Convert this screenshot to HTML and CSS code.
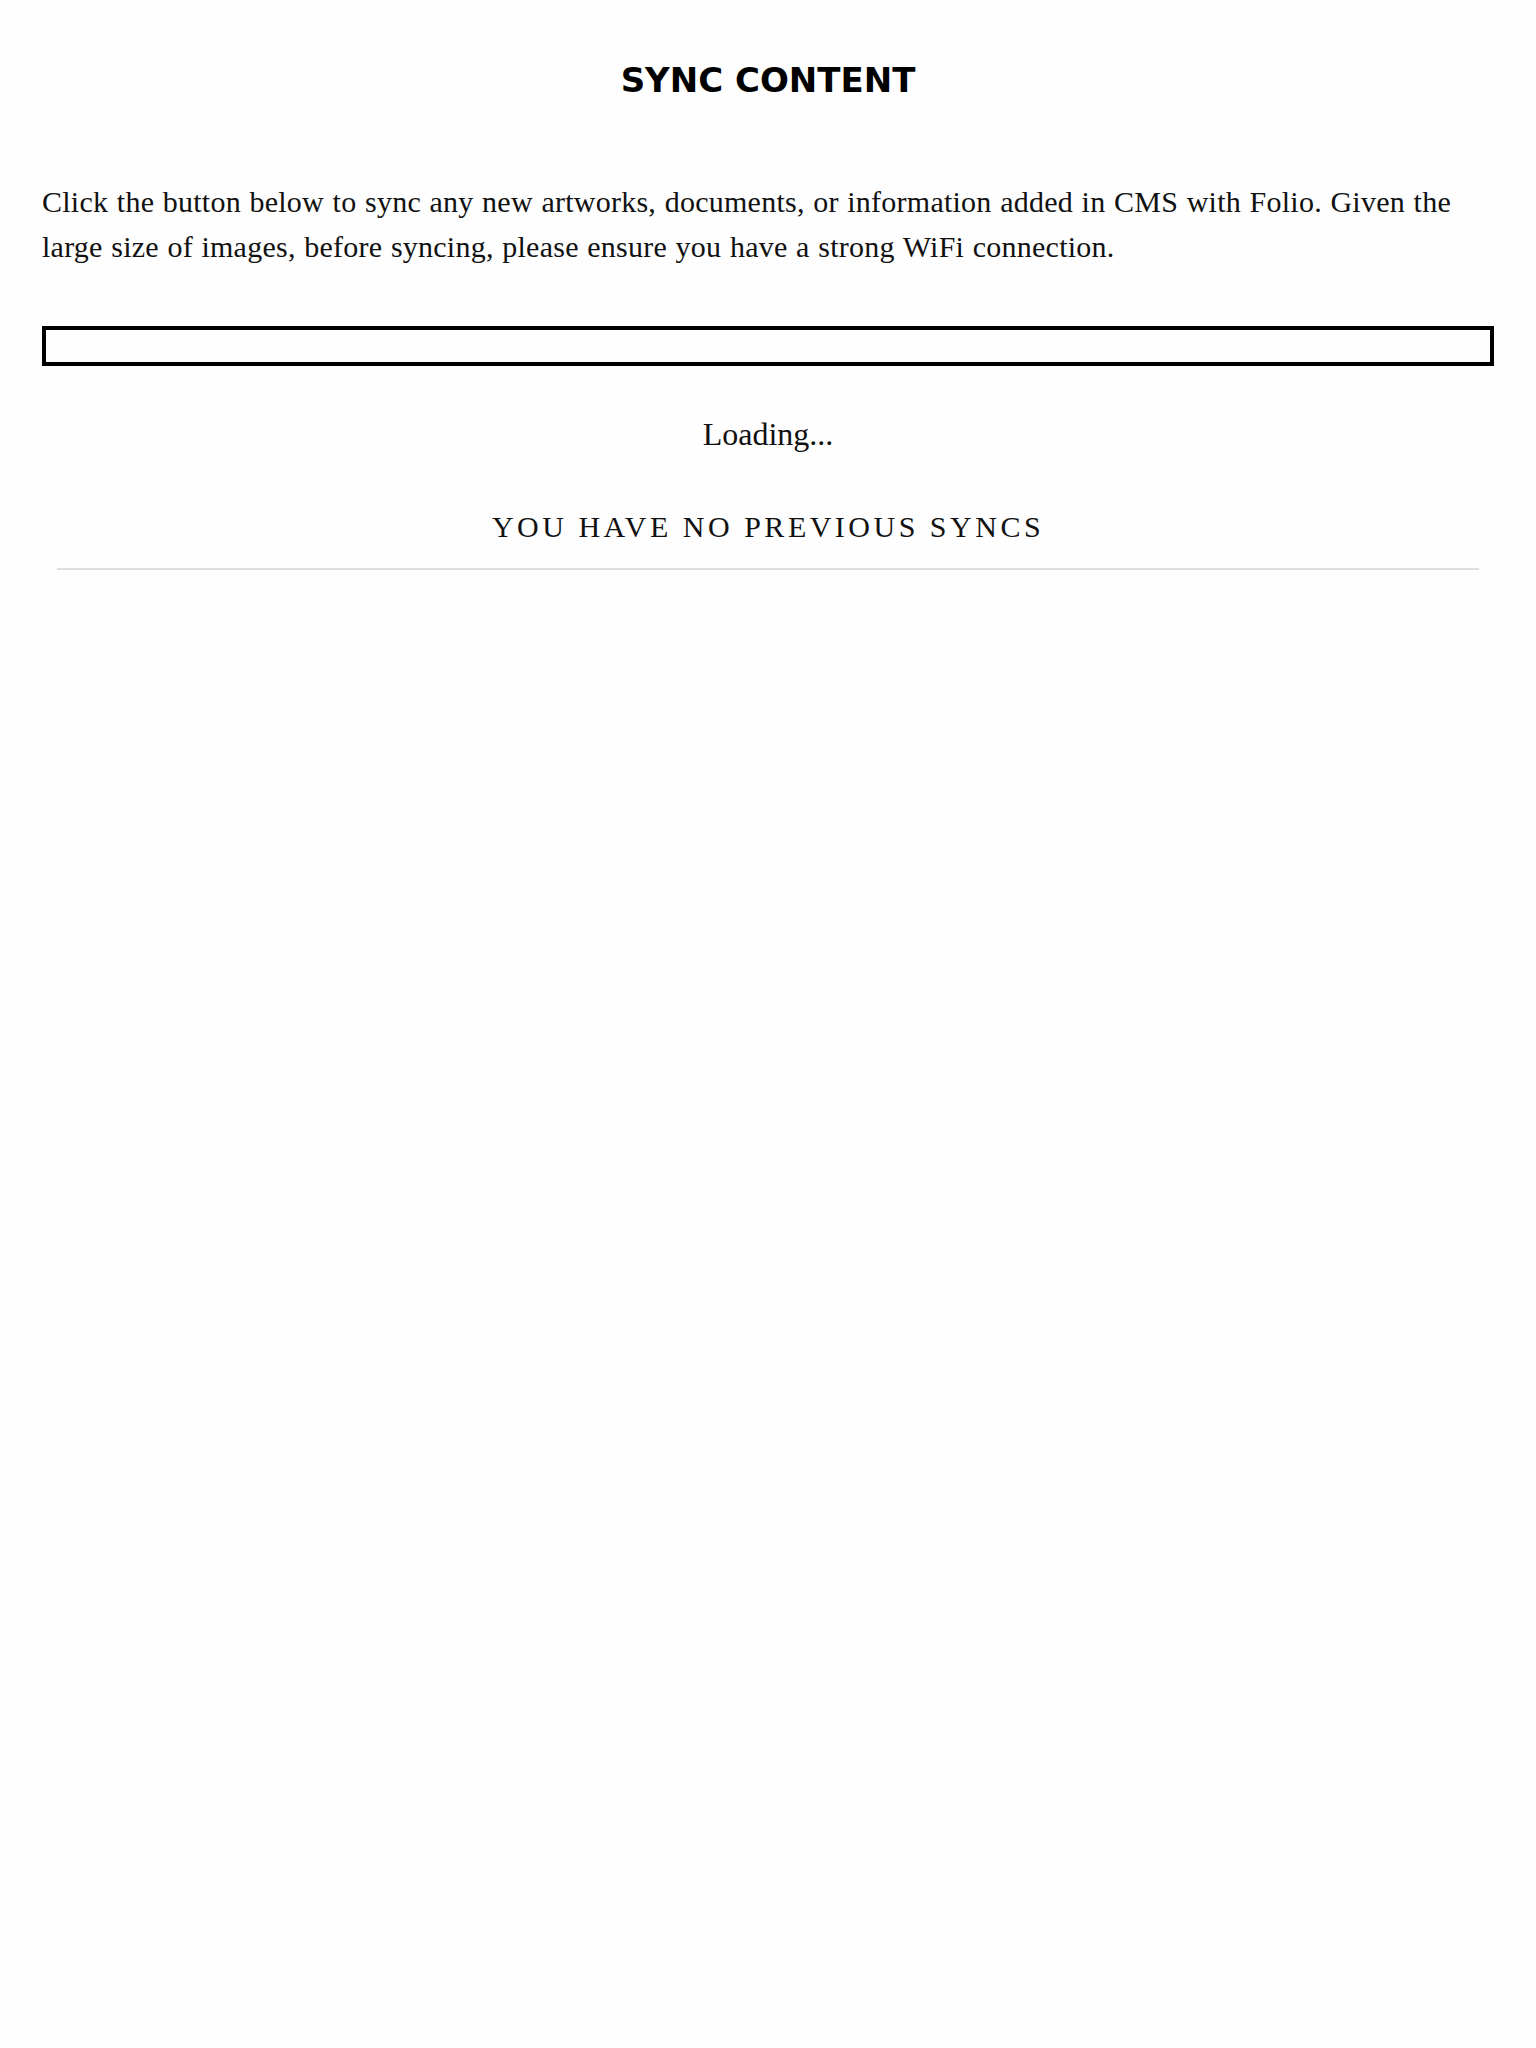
FILE: index.html
```html
<!DOCTYPE html>
<html lang="en">
<head>
<meta charset="utf-8">
<title>Sync Content</title>
<link rel="stylesheet" href="styles.css">
</head>
<body>
<main class="page">
  <h1 class="title">SYNC CONTENT</h1>
  <p class="intro">Click the button below to sync any new artworks, documents, or information added in CMS with Folio. Given the large size of images, before syncing, please ensure you have a strong WiFi connection.</p>
  <div class="sync-button"></div>
  <div class="loading">Loading...</div>
  <h2 class="history-title">YOU HAVE NO PREVIOUS SYNCS</h2>
  <hr class="divider">
</main>
</body>
</html>
```

FILE: styles.css
```css
html, body {
  margin: 0;
  padding: 0;
  background: #fefefe;
}

body {
  font-family: "Liberation Serif", "Times New Roman", serif;
  color: #111;
}

.page {
  display: flex;
  flex-direction: column;
  padding: 60px 42px 0;
}

.title {
  margin: 0;
  font-family: "DejaVu Sans", "Liberation Sans", sans-serif;
  font-weight: bold;
  font-size: 34px;
  line-height: 40px;
  text-align: center;
  color: #000;
}

.intro {
  margin: 79px 0 0;
  font-size: 30px;
  line-height: 45px;
  letter-spacing: 0.25px;
  word-spacing: 0.8px;
}

.sync-button {
  margin-top: 57px;
  height: 32px;
  border: 4px solid #000;
}

.loading {
  margin-top: 48px;
  font-size: 32px;
  line-height: 40px;
  text-align: center;
}

.history-title {
  margin: 55px 0 0;
  font-weight: normal;
  font-size: 30px;
  line-height: 36px;
  letter-spacing: 3.5px;
  text-align: center;
}

.divider {
  margin: 23px 15px 0;
  border: 0;
  height: 2px;
  background: #dddddd;
}
```
